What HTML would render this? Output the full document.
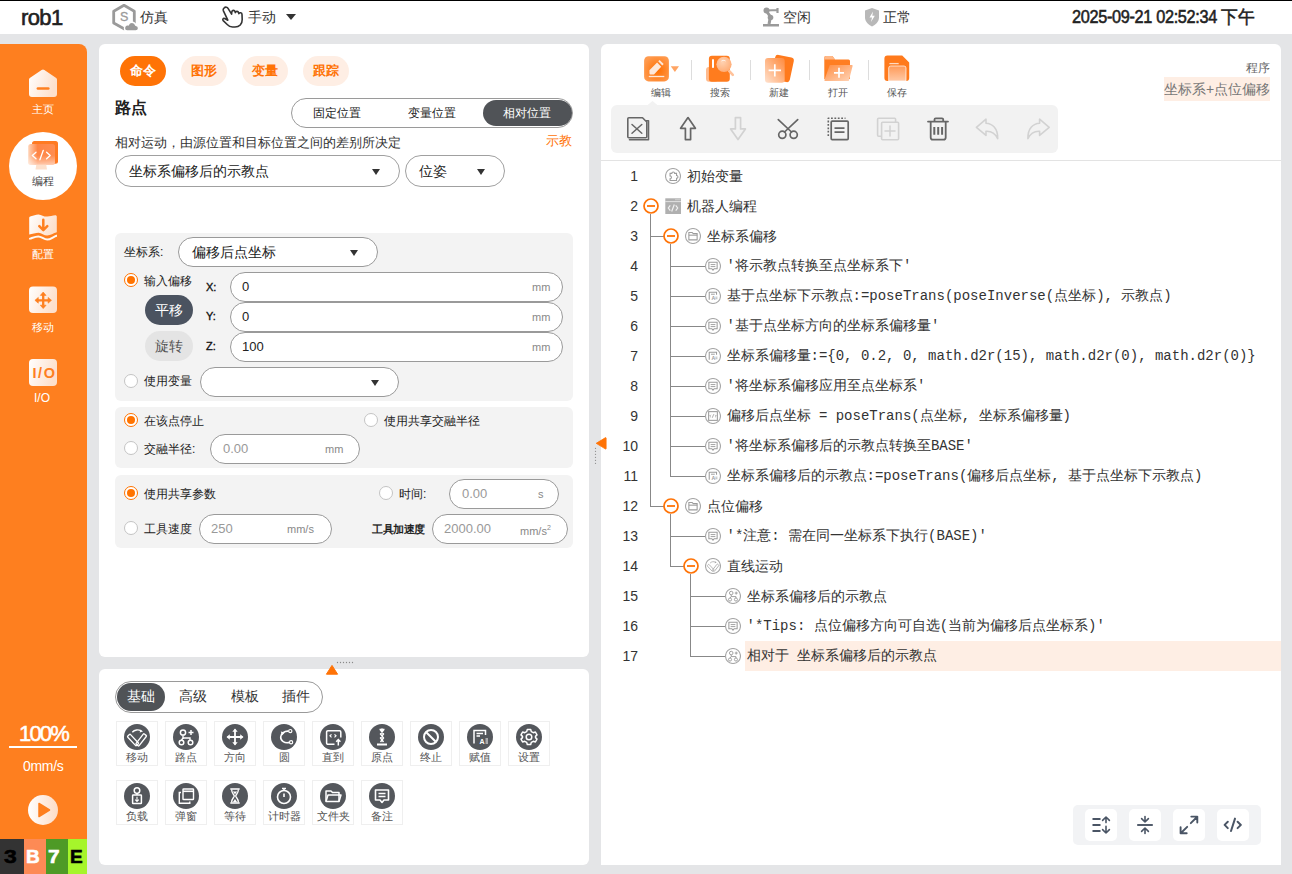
<!DOCTYPE html>
<html><head><meta charset="utf-8">
<style>
*{box-sizing:border-box;margin:0;padding:0}
html,body{width:1292px;height:874px;overflow:hidden;background:#e4e5e7;font-family:"Liberation Sans",sans-serif;color:#333}
.a{position:absolute}
.t{position:absolute;white-space:nowrap;line-height:1}
#top{left:0;top:0;width:1292px;height:34px;background:#fff;border-top:1px solid #000}
#side{left:0;top:44px;width:87px;height:830px;background:#fe7f1f;border-top-right-radius:8px}
.panel{position:absolute;background:#fff;border-radius:6px}
.pill{position:absolute;border-radius:15px;text-align:center;white-space:nowrap}
.radio{position:absolute;width:14px;height:14px;border-radius:50%;border:1px solid #c4c4c4;background:#fff}
.radio.on{border:1px solid #ff7300;background:#fff}
.radio.on:after{content:"";position:absolute;left:2px;top:2px;width:8px;height:8px;border-radius:50%;background:#ff7300}
.inp{position:absolute;border:1px solid #9a9a9a;border-radius:16px;background:#fff}
.tri{position:absolute;width:0;height:0;border-left:4.5px solid transparent;border-right:4.5px solid transparent;border-top:6px solid #333}
.box{position:absolute;background:#f3f3f3;border-radius:6px}
</style></head><body>
<!-- TOP BAR -->
<div id="top" class="a"></div>
<div class="t" style="left:21px;top:7px;font-size:22px;color:#222;-webkit-text-stroke:0.6px #222;letter-spacing:-0.6px">rob1</div>
<svg class="a" style="left:110px;top:3px" width="30" height="29" viewBox="0 0 30 29">
 <path d="M14 2.3 L24.3 8.2 V20 L14 25.8 L3.7 20 V8.2 Z" fill="none" stroke="#9a9a9a" stroke-width="2.8" stroke-linejoin="round"/>
 <text x="14.1" y="18" font-size="12.5" font-family="Liberation Sans" fill="#9a9a9a" stroke="#9a9a9a" stroke-width="0.3" text-anchor="middle">S</text>
 <path d="M17 28 h8.5 a2.9 2.9 0 0 0 0.3-5.8 a4 4 0 0 0-7.6 -0.3 a3 3 0 0 0 -1.2 6.1z" fill="#9a9a9a" stroke="#fff" stroke-width="1.4"/>
</svg>
<div class="t" style="left:140px;top:10px;font-size:14px;color:#333">仿真</div>
<svg class="a" style="left:221px;top:5px" width="25" height="24" viewBox="0 0 25 24">
 <path d="M3.2 2.8 C4.5 1.6 6.3 2.1 7.2 3.6 L10.6 9.2 L10.8 6.9 C11.2 4.9 13.6 4.9 14.1 6.8 L14.3 7.6 C14.9 5.9 17.2 6 17.6 7.8 L17.8 8.6 C18.6 7.1 21 7.6 21 9.5 L21.2 14.5 C21.3 19 18.3 22 14 22 L11.5 22 C9.3 22 7.6 21 6.2 19.5 L2.2 15.6 C1.2 14.5 2.2 12.9 3.7 13.5 L6.8 15.2 L2.3 5.6 C1.9 4.6 2.3 3.5 3.2 2.8 Z" fill="none" stroke="#333" stroke-width="1.6" stroke-linejoin="round"/>
</svg>
<div class="t" style="left:248px;top:10px;font-size:14px;color:#333">手动</div>
<div class="tri" style="left:286px;top:14px;border-left-width:5px;border-right-width:5px;border-top-width:6px"></div>
<svg class="a" style="left:762px;top:7px" width="19" height="20" viewBox="0 0 19 20">
 <circle cx="4.5" cy="3.5" r="3" fill="#9a9a9a"/><path d="M4.5 3.5 L15.5 3 M15.5 1 V6" stroke="#9a9a9a" stroke-width="2.2" fill="none"/>
 <path d="M4.5 4 L8.5 10" stroke="#9a9a9a" stroke-width="3"/><circle cx="8.5" cy="10.5" r="2.8" fill="#9a9a9a"/>
 <path d="M8 12 L7 17" stroke="#9a9a9a" stroke-width="3"/><rect x="1" y="17" width="16" height="2.5" fill="#9a9a9a"/>
</svg>
<div class="t" style="left:783px;top:10px;font-size:14px;color:#333">空闲</div>
<svg class="a" style="left:864px;top:7px" width="16" height="20" viewBox="0 0 16 20">
 <path d="M8 1 L15 3.5 V10.5 C15 15 11.5 17.5 8 19.5 C4.5 17.5 1 15 1 10.5 V3.5 Z" fill="#b8b8b8"/>
 <path d="M9 4.5 L5.5 10.5 H8 L7 15 L10.8 8.8 H8.3 Z" fill="#fff"/>
</svg>
<div class="t" style="left:883px;top:10px;font-size:14px;color:#333">正常</div>
<div class="t" style="left:1072px;top:9px;font-size:17.5px;color:#222;-webkit-text-stroke:0.55px #222;letter-spacing:-0.35px;transform:scaleX(0.93);transform-origin:0 0">2025-09-21 02:52:34 下午</div>

<!-- SIDEBAR -->
<div id="side" class="a"></div>
<svg width="0" height="0" style="position:absolute"><defs>
<linearGradient id="wg" x1="0" y1="0" x2="1" y2="0.3"><stop offset="0" stop-color="#fff"/><stop offset="1" stop-color="#fde0cc"/></linearGradient>
<linearGradient id="og" x1="0" y1="0" x2="1" y2="1"><stop offset="0" stop-color="#ffb27a"/><stop offset="1" stop-color="#ff6a10"/></linearGradient>
<linearGradient id="og2" x1="0" y1="0" x2="1" y2="0"><stop offset="0" stop-color="#ff8a3a"/><stop offset="1" stop-color="#ffc79e"/></linearGradient>
</defs></svg>
<!-- home -->
<svg class="a" style="left:29px;top:68px" width="28" height="29" viewBox="0 0 28 29">
 <path d="M12.6 1.9 a2.4 2.4 0 0 1 2.8 0 L27.2 10 a1.8 1.8 0 0 1 0.8 1.5 V26 a3 3 0 0 1-3 3 H3 a3 3 0 0 1-3-3 V11.5 a1.8 1.8 0 0 1 0.8-1.5 Z" fill="url(#wg)"/>
 <rect x="7.6" y="19.2" width="13" height="2.6" rx="1.3" fill="#fe7f1f"/>
</svg>
<div class="t" style="left:32px;top:104px;font-size:11px;color:#fff">主页</div>
<div class="a" style="left:9px;top:132px;width:68px;height:68px;border-radius:50%;background:#fff"></div>
<svg class="a" style="left:27px;top:140px" width="32" height="31" viewBox="0 0 32 31">
 <defs><linearGradient id="cg1" x1="0" y1="0" x2="1" y2="0"><stop offset="0" stop-color="#ffd6bb"/><stop offset="0.35" stop-color="#ff8545"/><stop offset="1" stop-color="#ff8d50"/></linearGradient>
 <linearGradient id="cg2" x1="0" y1="0" x2="0" y2="1"><stop offset="0.55" stop-color="#fff" stop-opacity="0"/><stop offset="1" stop-color="#fff" stop-opacity="0.55"/></linearGradient></defs>
 <rect x="5" y="1" width="26" height="22.8" rx="2.5" fill="#ff7a22"/>
 <rect x="1.2" y="3.9" width="26.8" height="20.9" rx="2.5" fill="url(#cg1)"/>
 <rect x="1.2" y="3.9" width="26.8" height="20.9" rx="2.5" fill="url(#cg2)"/>
 <path d="M9.3 24.8 H19.2 L20 29.6 H8.5Z" fill="#fde0cc"/>
 <path d="M9 12.2 L5.3 15.5 L9 18.8 M19.6 12.2 L23.2 15.5 L19.6 18.8 M16.3 10.3 L12.9 19.8" stroke="#fff" stroke-width="1.3" fill="none" stroke-linecap="round" stroke-linejoin="round"/>
</svg>
<div class="t" style="left:32px;top:176px;font-size:11px;color:#444">编程</div>
<!-- config -->
<svg class="a" style="left:29px;top:213px" width="28" height="28" viewBox="0 0 28 28">
 <path d="M0.2 5 C0.2 4 1 3.6 2 3.3 C4.5 2.5 7 1.3 9.6 1.4 C12.5 1.6 15 3.8 18.2 3.6 C21 3.4 23.5 2.3 26.3 2.2 C27.2 2.2 27.8 2.8 27.8 3.6 V19.3 C24.5 19.9 21.5 22.6 18.2 22.6 C15 22.6 12.5 19.7 9.6 19.7 C6.5 19.7 3.4 20.9 0.2 21.6 Z" fill="url(#wg)"/>
 <path d="M1 25.6 C3.5 24.8 6.5 23.4 9.3 23.4 C12.3 23.4 15 26.6 18.2 26.6 C21.3 26.6 24.5 23.7 27.5 22.8" stroke="#fff" stroke-width="2" fill="none" stroke-linecap="round" opacity="0.95"/>
 <path d="M14.3 6.8 V16.5 M10.3 13.2 L14.3 17.2 L18.3 13.2" stroke="#fe7f1f" stroke-width="2.5" fill="none" stroke-linecap="round" stroke-linejoin="round"/>
</svg>
<div class="t" style="left:32px;top:249px;font-size:11px;color:#fff">配置</div>
<!-- move -->
<svg class="a" style="left:29px;top:286px" width="28" height="28" viewBox="0 0 28 28">
 <rect x="0" y="0.5" width="28" height="26.5" rx="4" fill="url(#wg)"/>
 <path d="M14.2 9 V19.6 M8.9 14.3 H19.5" stroke="#fe7f1f" stroke-width="2.3"/>
 <path d="M14.2 6 L11.3 9.4 H17.1Z M14.2 22.6 L11.3 19.2 H17.1Z M5.9 14.3 L9.3 11.4 V17.2Z M22.5 14.3 L19.1 11.4 V17.2Z" fill="#fe7f1f" stroke="#fe7f1f" stroke-width="0.6" stroke-linejoin="round"/>
</svg>
<div class="t" style="left:32px;top:322px;font-size:11px;color:#fff">移动</div>
<!-- io -->
<svg class="a" style="left:29px;top:359px" width="28" height="28" viewBox="0 0 28 28">
 <rect x="0" y="0" width="28" height="27" rx="4" fill="url(#wg)"/>
 <text x="15.5" y="19.3" font-size="14.5" font-weight="bold" font-family="Liberation Sans" fill="#fe7f1f" text-anchor="middle" letter-spacing="1.6">I/O</text>
</svg>
<div class="t" style="left:34px;top:392px;font-size:12px;color:#fff">I/O</div>
<div class="t" style="left:19px;top:723px;font-size:22px;color:#fff;letter-spacing:-1.8px;-webkit-text-stroke:0.5px #fff">100%</div>
<div class="a" style="left:9px;top:746px;width:68px;height:1.5px;background:#fff"></div>
<div class="t" style="left:23px;top:759px;font-size:14px;color:#fff;letter-spacing:-0.3px">0mm/s</div>
<div class="a" style="left:28px;top:795px;width:30px;height:30px;border-radius:50%;background:linear-gradient(90deg,#fff,#fddcc6)"></div>
<svg class="a" style="left:37px;top:802px" width="14" height="16" viewBox="0 0 14 16"><path d="M2 1.5 L12.5 8 L2 14.5 Z" fill="#fe7f1f" stroke="#fe7f1f" stroke-width="1.5" stroke-linejoin="round"/></svg>
<div class="a" style="left:0;top:839px;width:24px;height:35px;background:#333"></div>
<div class="a" style="left:24px;top:839px;width:22px;height:35px;background:#fd8a55"></div>
<div class="a" style="left:46px;top:839px;width:22px;height:35px;background:#4e9a26"></div>
<div class="a" style="left:68px;top:839px;width:19px;height:35px;background:#a6f52b"></div>
<div class="t" style="left:4px;top:847px;font-size:19px;font-weight:bold;color:#000;-webkit-text-stroke:0.6px #000;transform:scaleX(1.2);transform-origin:0 0">3</div>
<div class="t" style="left:26px;top:847px;font-size:19px;font-weight:bold;color:#fff;-webkit-text-stroke:0.6px #fff">B</div>
<div class="t" style="left:48px;top:847px;font-size:19px;font-weight:bold;color:#fff;-webkit-text-stroke:0.6px #fff;transform:scaleX(1.1);transform-origin:0 0">7</div>
<div class="t" style="left:70px;top:847px;font-size:19px;font-weight:bold;color:#000;-webkit-text-stroke:0.6px #000">E</div>

<!-- LEFT PANEL -->
<div class="panel" style="left:99px;top:44px;width:490px;height:613px"></div>
<div class="pill" style="left:120px;top:56px;width:46px;height:30px;background:#ff7306"></div>
<div class="t" style="left:130px;top:64px;font-size:13px;color:#fff;font-weight:bold">命令</div>
<div class="pill" style="left:181px;top:56px;width:46px;height:30px;background:#feeee4"></div>
<div class="t" style="left:191px;top:64px;font-size:13px;color:#ff7306;font-weight:bold">图形</div>
<div class="pill" style="left:242px;top:56px;width:46px;height:30px;background:#feeee4"></div>
<div class="t" style="left:252px;top:64px;font-size:13px;color:#ff7306;font-weight:bold">变量</div>
<div class="pill" style="left:303px;top:56px;width:46px;height:30px;background:#feeee4"></div>
<div class="t" style="left:313px;top:64px;font-size:13px;color:#ff7306;font-weight:bold">跟踪</div>
<div class="t" style="left:115px;top:100px;font-size:16px;color:#222;font-weight:bold">路点</div>
<div class="a" style="left:291px;top:98px;width:282px;height:30px;border:1px solid #9a9a9a;border-radius:15px"></div>
<div class="a" style="left:483px;top:100px;width:89px;height:26px;border-radius:13px;background:#505357"></div>
<div class="t" style="left:313px;top:107px;font-size:12px;color:#222">固定位置</div>
<div class="t" style="left:408px;top:107px;font-size:12px;color:#222">变量位置</div>
<div class="t" style="left:503px;top:107px;font-size:12px;color:#fff">相对位置</div>
<div class="t" style="left:115px;top:136px;font-size:13px;color:#333">相对运动，由源位置和目标位置之间的差别所决定</div>
<div class="t" style="left:546px;top:134px;font-size:13px;color:#ff7306">示教</div>
<div class="inp" style="left:115px;top:155px;width:285px;height:32px;border-color:#a0a0a0"></div>
<div class="t" style="left:129px;top:164px;font-size:14px;color:#222">坐标系偏移后的示教点</div>
<div class="tri" style="left:372px;top:169px"></div>
<div class="inp" style="left:405px;top:155px;width:100px;height:32px;border-color:#a0a0a0"></div>
<div class="t" style="left:419px;top:164px;font-size:14px;color:#222">位姿</div>
<div class="tri" style="left:477px;top:169px"></div>

<div class="box" style="left:115px;top:233px;width:458px;height:168px"></div>
<div class="t" style="left:124px;top:246px;font-size:12px;color:#222">坐标系:</div>
<div class="inp" style="left:178px;top:237px;width:200px;height:30px"></div>
<div class="t" style="left:192px;top:245px;font-size:14px;color:#222">偏移后点坐标</div>
<div class="tri" style="left:350px;top:250px"></div>
<div class="radio on" style="left:124px;top:273px"></div>
<div class="t" style="left:144px;top:275px;font-size:12px;color:#222">输入偏移</div>
<div class="pill" style="left:145px;top:295px;width:48px;height:30px;background:#4b5360"></div>
<div class="t" style="left:155px;top:303px;font-size:14px;color:#fff">平移</div>
<div class="pill" style="left:145px;top:331px;width:48px;height:30px;background:#e4e4e4"></div>
<div class="t" style="left:155px;top:339px;font-size:14px;color:#555">旋转</div>
<div class="t" style="left:206px;top:282px;font-size:11px;color:#111;-webkit-text-stroke:0.35px #111">X:</div>
<div class="t" style="left:206px;top:311px;font-size:11px;color:#111;-webkit-text-stroke:0.35px #111">Y:</div>
<div class="t" style="left:206px;top:341px;font-size:11px;color:#111;-webkit-text-stroke:0.35px #111">Z:</div>
<div class="inp" style="left:230px;top:272px;width:333px;height:30px"></div>
<div class="inp" style="left:230px;top:302px;width:333px;height:30px"></div>
<div class="inp" style="left:230px;top:332px;width:333px;height:30px"></div>
<div class="t" style="left:242px;top:280px;font-size:13px;color:#222">0</div>
<div class="t" style="left:242px;top:310px;font-size:13px;color:#222">0</div>
<div class="t" style="left:242px;top:340px;font-size:13px;color:#222">100</div>
<div class="t" style="left:532px;top:282px;font-size:11px;color:#888">mm</div>
<div class="t" style="left:532px;top:312px;font-size:11px;color:#888">mm</div>
<div class="t" style="left:532px;top:342px;font-size:11px;color:#888">mm</div>
<div class="radio" style="left:124px;top:374px"></div>
<div class="t" style="left:144px;top:375px;font-size:12px;color:#222">使用变量</div>
<div class="inp" style="left:200px;top:367px;width:199px;height:30px"></div>
<div class="tri" style="left:371px;top:380px"></div>

<div class="box" style="left:115px;top:407px;width:458px;height:61px"></div>
<div class="radio on" style="left:124px;top:413px"></div>
<div class="t" style="left:144px;top:415px;font-size:12px;color:#222">在该点停止</div>
<div class="radio" style="left:364px;top:413px"></div>
<div class="t" style="left:384px;top:415px;font-size:12px;color:#222">使用共享交融半径</div>
<div class="radio" style="left:124px;top:441px"></div>
<div class="t" style="left:144px;top:443px;font-size:12px;color:#222">交融半径:</div>
<div class="inp" style="left:210px;top:434px;width:150px;height:30px"></div>
<div class="t" style="left:223px;top:442px;font-size:13px;color:#999">0.00</div>
<div class="t" style="left:325px;top:444px;font-size:11px;color:#888">mm</div>

<div class="box" style="left:115px;top:475px;width:458px;height:73px"></div>
<div class="radio on" style="left:124px;top:486px"></div>
<div class="t" style="left:144px;top:488px;font-size:12px;color:#222">使用共享参数</div>
<div class="radio" style="left:379px;top:486px"></div>
<div class="t" style="left:399px;top:488px;font-size:12px;color:#222">时间:</div>
<div class="inp" style="left:449px;top:479px;width:110px;height:30px"></div>
<div class="t" style="left:462px;top:487px;font-size:13px;color:#999">0.00</div>
<div class="t" style="left:538px;top:489px;font-size:11px;color:#888">s</div>
<div class="radio" style="left:124px;top:521px"></div>
<div class="t" style="left:144px;top:523px;font-size:12px;color:#222">工具速度</div>
<div class="inp" style="left:199px;top:514px;width:133px;height:30px"></div>
<div class="t" style="left:211px;top:522px;font-size:13px;color:#999">250</div>
<div class="t" style="left:287px;top:524px;font-size:11px;color:#888">mm/s</div>
<div class="t" style="left:372px;top:524px;font-size:10.5px;color:#111;letter-spacing:-0.45px;-webkit-text-stroke:0.35px #111">工具加速度</div>
<div class="inp" style="left:432px;top:514px;width:136px;height:30px"></div>
<div class="t" style="left:444px;top:522px;font-size:13px;color:#999">2000.00</div>
<div class="t" style="left:520px;top:524px;font-size:11px;color:#888">mm/s<sup style="font-size:7px;vertical-align:5px">2</sup></div>
<div class="panel" style="left:99px;top:669px;width:490px;height:196px"></div>
<svg class="a" style="left:324px;top:664px" width="16" height="12" viewBox="324 664 16 12"><path d="M332 665.4 L337.6 674.2 H326.4Z" fill="#ff7306" stroke="#ff7306" stroke-width="1" stroke-linejoin="round"/></svg>
<svg class="a" style="left:330px;top:655px" width="30" height="15" viewBox="330 655 30 15"><circle cx="337.5" cy="662.5" r="0.65" fill="#8a8a8a"/><circle cx="340.5" cy="662.5" r="0.65" fill="#8a8a8a"/><circle cx="343.5" cy="662.5" r="0.65" fill="#8a8a8a"/><circle cx="346.5" cy="662.5" r="0.65" fill="#8a8a8a"/><circle cx="349.5" cy="662.5" r="0.65" fill="#8a8a8a"/><circle cx="352.5" cy="662.5" r="0.65" fill="#8a8a8a"/></svg>
<div class="a" style="left:115px;top:681px;width:208px;height:32px;border:1px solid #9a9a9a;border-radius:16px"></div>
<div class="a" style="left:117px;top:683px;width:48px;height:28px;border-radius:14px;background:#505357"></div>
<div class="t" style="left:127px;top:690px;font-size:13.5px;color:#fff">基础</div>
<div class="t" style="left:179px;top:690px;font-size:13.5px;color:#333">高级</div>
<div class="t" style="left:231px;top:690px;font-size:13.5px;color:#333">模板</div>
<div class="t" style="left:282px;top:690px;font-size:13.5px;color:#333">插件</div>
<div class="a" style="left:116px;top:721px;width:42px;height:45px;border:1px solid #efefef"></div><svg class="a" style="left:124px;top:724px" width="26" height="26" viewBox="0 0 26 26"><circle cx="13" cy="13" r="13" fill="#54575c"/><rect x="-1.9" y="-6.4" width="3.8" height="12.8" rx="0.8" transform="translate(9 16) rotate(-43)" stroke="#fff" stroke-width="1.3" fill="none"/><rect x="-1.9" y="-6.6" width="3.8" height="13.2" rx="0.8" transform="translate(17.2 15.9) rotate(38)" stroke="#fff" stroke-width="1.3" fill="none"/><path d="M8.3 8.2 C10.5 5.6 14.5 5.3 17 6.8" stroke="#fff" stroke-width="1.4" fill="none"/><path d="M19 7.6 L15.6 8.4 L16.6 5.4Z" fill="#fff"/></svg><div class="t" style="left:126.0px;top:752px;font-size:11px;color:#555">移动</div>
<div class="a" style="left:165px;top:721px;width:42px;height:45px;border:1px solid #efefef"></div><svg class="a" style="left:173px;top:724px" width="26" height="26" viewBox="0 0 26 26"><circle cx="13" cy="13" r="13" fill="#54575c"/><circle cx="10" cy="8.5" r="2.6" stroke="#fff" stroke-width="1.5" fill="none"/><circle cx="8.5" cy="18.5" r="2.3" stroke="#fff" stroke-width="1.5" fill="none"/><circle cx="17.5" cy="18.5" r="2.3" stroke="#fff" stroke-width="1.5" fill="none"/><path d="M10 11.2 V14 M10 14 L8.5 16.2 M10 14 L17 14 V16.2" stroke="#fff" stroke-width="1.4" fill="none"/><path d="M15.5 8.5 H20.5 M18 6 V11" stroke="#fff" stroke-width="1.5"/></svg><div class="t" style="left:175.0px;top:752px;font-size:11px;color:#555">路点</div>
<div class="a" style="left:214px;top:721px;width:42px;height:45px;border:1px solid #efefef"></div><svg class="a" style="left:222px;top:724px" width="26" height="26" viewBox="0 0 26 26"><circle cx="13" cy="13" r="13" fill="#54575c"/><path d="M13 5.5 V20.5 M5.5 13 H20.5" stroke="#fff" stroke-width="1.8"/><path d="M13 4.5 L10.3 7.8 H15.7Z M13 21.5 L10.3 18.2 H15.7Z M4.5 13 L7.8 10.3 V15.7Z M21.5 13 L18.2 10.3 V15.7Z" fill="#fff"/></svg><div class="t" style="left:224.0px;top:752px;font-size:11px;color:#555">方向</div>
<div class="a" style="left:263px;top:721px;width:42px;height:45px;border:1px solid #efefef"></div><svg class="a" style="left:271px;top:724px" width="26" height="26" viewBox="0 0 26 26"><circle cx="13" cy="13" r="13" fill="#54575c"/><path d="M17.8 7.2 C13.5 6.8 9.8 9.3 9.7 13 C9.6 17 13.5 19.5 18.5 18.4" stroke="#fff" stroke-width="1.6" fill="none"/><circle cx="19.3" cy="7.1" r="1.6" stroke="#fff" stroke-width="1.2" fill="#555"/><circle cx="20.1" cy="18.2" r="1.6" stroke="#fff" stroke-width="1.2" fill="#555"/><path d="M9.8 7.6 L14 8.6 L11 11.4Z" fill="#fff"/></svg><div class="t" style="left:278.5px;top:752px;font-size:11px;color:#555">圆</div>
<div class="a" style="left:312px;top:721px;width:42px;height:45px;border:1px solid #efefef"></div><svg class="a" style="left:320px;top:724px" width="26" height="26" viewBox="0 0 26 26"><circle cx="13" cy="13" r="13" fill="#54575c"/><path d="M14.5 20.2 H7.8 a1.2 1.2 0 0 1-1.2-1.2 V7.9 a1.2 1.2 0 0 1 1.2-1.2 H19.6 a1.2 1.2 0 0 1 1.2 1.2 V13.5" stroke="#fff" stroke-width="1.5" fill="none"/><path d="M11.5 10.3 L10 11.8 L11.5 13.3 M14.5 10.3 L16 11.8 L14.5 13.3" stroke="#fff" stroke-width="1.2" fill="none"/><path d="M18.3 21.5 V15.8 M16.2 17.8 L18.3 15.6 L20.4 17.8" stroke="#fff" stroke-width="1.5" fill="none"/></svg><div class="t" style="left:322.0px;top:752px;font-size:11px;color:#555">直到</div>
<div class="a" style="left:361px;top:721px;width:42px;height:45px;border:1px solid #efefef"></div><svg class="a" style="left:369px;top:724px" width="26" height="26" viewBox="0 0 26 26"><circle cx="13" cy="13" r="13" fill="#54575c"/><path d="M10.5 5.5 H15.5 M11.5 6 L14.5 10 L11.5 14 L14.5 18 M14.5 6 L11.5 10 L14.5 14 L11.5 18" stroke="#fff" stroke-width="1.4" fill="none"/><circle cx="13" cy="6" r="1.4" fill="#fff"/><path d="M8 20.5 H18" stroke="#fff" stroke-width="2"/></svg><div class="t" style="left:371.0px;top:752px;font-size:11px;color:#555">原点</div>
<div class="a" style="left:410px;top:721px;width:42px;height:45px;border:1px solid #efefef"></div><svg class="a" style="left:418px;top:724px" width="26" height="26" viewBox="0 0 26 26"><circle cx="13" cy="13" r="13" fill="#54575c"/><circle cx="13" cy="13" r="7" stroke="#fff" stroke-width="2" fill="none"/><path d="M8.2 8.2 L17.8 17.8" stroke="#fff" stroke-width="2"/></svg><div class="t" style="left:420.0px;top:752px;font-size:11px;color:#555">终止</div>
<div class="a" style="left:459px;top:721px;width:42px;height:45px;border:1px solid #efefef"></div><svg class="a" style="left:467px;top:724px" width="26" height="26" viewBox="0 0 26 26"><circle cx="13" cy="13" r="13" fill="#54575c"/><path d="M7 19.5 V6.5 H18.5 V11" stroke="#fff" stroke-width="1.5" fill="none"/><path d="M9.5 9.5 H16 M9.5 12 H13" stroke="#fff" stroke-width="1.3"/><text x="15" y="20" font-size="7" font-weight="bold" font-family="Liberation Sans" fill="#fff" text-anchor="middle">A</text><path d="M18.5 15 H21 M18.5 17 H21 M18.5 19 H21" stroke="#fff" stroke-width="1"/></svg><div class="t" style="left:469.0px;top:752px;font-size:11px;color:#555">赋值</div>
<div class="a" style="left:508px;top:721px;width:42px;height:45px;border:1px solid #efefef"></div><svg class="a" style="left:516px;top:724px" width="26" height="26" viewBox="0 0 26 26"><circle cx="13" cy="13" r="13" fill="#54575c"/><circle cx="13" cy="13" r="2.8" stroke="#fff" stroke-width="1.5" fill="none"/><path d="M11.3 5.5 H14.7 L15.3 7.6 L17.3 8.7 L19.4 8 L21 10.9 L19.5 12.4 V13.6 L21 15.1 L19.4 18 L17.3 17.3 L15.3 18.4 L14.7 20.5 H11.3 L10.7 18.4 L8.7 17.3 L6.6 18 L5 15.1 L6.5 13.6 V12.4 L5 10.9 L6.6 8 L8.7 8.7 L10.7 7.6Z" stroke="#fff" stroke-width="1.5" fill="none" stroke-linejoin="round"/></svg><div class="t" style="left:518.0px;top:752px;font-size:11px;color:#555">设置</div>
<div class="a" style="left:116px;top:780px;width:42px;height:45px;border:1px solid #efefef"></div><svg class="a" style="left:124px;top:783px" width="26" height="26" viewBox="0 0 26 26"><circle cx="13" cy="13" r="13" fill="#54575c"/><circle cx="13" cy="7.6" r="2.8" stroke="#fff" stroke-width="1.5" fill="none"/><path d="M13 10.4 V12" stroke="#fff" stroke-width="1.4"/><rect x="8.6" y="12" width="8.8" height="8.6" rx="0.6" stroke="#fff" stroke-width="1.5" fill="none"/><path d="M13 13.8 V18.3 M11.2 16.6 L13 18.4 L14.8 16.6" stroke="#fff" stroke-width="1.1" fill="none"/></svg><div class="t" style="left:126.0px;top:811px;font-size:11px;color:#555">负载</div>
<div class="a" style="left:165px;top:780px;width:42px;height:45px;border:1px solid #efefef"></div><svg class="a" style="left:173px;top:783px" width="26" height="26" viewBox="0 0 26 26"><circle cx="13" cy="13" r="13" fill="#54575c"/><rect x="10" y="6" width="10.5" height="10.5" rx="0.6" stroke="#fff" stroke-width="1.4" fill="none"/><path d="M10 8.3 H20.5" stroke="#fff" stroke-width="1.6"/><path d="M8 9.5 H6.3 V20.3 H16.8 V18.5" stroke="#fff" stroke-width="1.4" fill="none"/></svg><div class="t" style="left:175.0px;top:811px;font-size:11px;color:#555">弹窗</div>
<div class="a" style="left:214px;top:780px;width:42px;height:45px;border:1px solid #efefef"></div><svg class="a" style="left:222px;top:783px" width="26" height="26" viewBox="0 0 26 26"><circle cx="13" cy="13" r="13" fill="#54575c"/><path d="M8.3 6 H17.7 M8.3 20 H17.7" stroke="#fff" stroke-width="1.7"/><path d="M9.6 6.5 C9.6 10.5 12.3 11.7 12.3 13 C12.3 14.3 9.6 15.5 9.6 19.5 M16.4 6.5 C16.4 10.5 13.7 11.7 13.7 13 C13.7 14.3 16.4 15.5 16.4 19.5" stroke="#fff" stroke-width="1.3" fill="none"/><path d="M10.8 8.5 H15.2 L13 11.3Z M13 16 L10.8 19.3 H15.2Z" fill="#fff"/></svg><div class="t" style="left:224.0px;top:811px;font-size:11px;color:#555">等待</div>
<div class="a" style="left:263px;top:780px;width:42px;height:45px;border:1px solid #efefef"></div><svg class="a" style="left:271px;top:783px" width="26" height="26" viewBox="0 0 26 26"><circle cx="13" cy="13" r="13" fill="#54575c"/><circle cx="13" cy="14" r="6.5" stroke="#fff" stroke-width="1.6" fill="none"/><path d="M11 5.5 H15 M13 5.5 V7.5 M13 14 V10.5" stroke="#fff" stroke-width="1.6"/></svg><div class="t" style="left:267.5px;top:811px;font-size:11px;color:#555">计时器</div>
<div class="a" style="left:312px;top:780px;width:42px;height:45px;border:1px solid #efefef"></div><svg class="a" style="left:320px;top:783px" width="26" height="26" viewBox="0 0 26 26"><circle cx="13" cy="13" r="13" fill="#54575c"/><path d="M6 8 H11 L12.5 9.5 H19 V18.5 H6Z" stroke="#fff" stroke-width="1.5" fill="none" stroke-linejoin="round"/><path d="M6 18.5 L8 12 H21 L19 18.5" stroke="#fff" stroke-width="1.5" fill="none" stroke-linejoin="round"/></svg><div class="t" style="left:316.5px;top:811px;font-size:11px;color:#555">文件夹</div>
<div class="a" style="left:361px;top:780px;width:42px;height:45px;border:1px solid #efefef"></div><svg class="a" style="left:369px;top:783px" width="26" height="26" viewBox="0 0 26 26"><circle cx="13" cy="13" r="13" fill="#54575c"/><path d="M6.5 7 H19.5 V17 H15 L13 19.5 L11 17 H6.5Z" stroke="#fff" stroke-width="1.6" fill="none" stroke-linejoin="round"/><path d="M9.5 10.5 H16.5 M9.5 13.5 H16.5" stroke="#fff" stroke-width="1.4"/></svg><div class="t" style="left:371.0px;top:811px;font-size:11px;color:#555">备注</div>

<!-- RIGHT PANEL -->
<div class="panel" style="left:601px;top:44px;width:680px;height:821px;border-bottom-right-radius:0;border-bottom-left-radius:0"></div>
<!-- big toolbar icons -->
<svg class="a" style="left:640px;top:52px" width="44" height="34" viewBox="640 52 44 34">
 <defs><radialGradient id="eg" cx="0.55" cy="0.55" r="0.6"><stop offset="0" stop-color="#ff6f00"/><stop offset="1" stop-color="#ff9a4e"/></radialGradient></defs>
 <rect x="644.1" y="56.3" width="24.8" height="25.1" rx="4.5" fill="url(#eg)"/>
 <path d="M649.4 70.2 L657.1 62.4 L661.2 66.7 L654 74.6 H650.5 a1 1 0 0 1-1-1Z" fill="#fde8da"/>
 <path d="M658.2 61.3 L659.6 59.9 L663.7 64.1 L662.3 65.5Z" fill="#fde8da"/>
 <path d="M648.8 76.5 H664.3" stroke="#fde8da" stroke-width="1.3"/>
 <path d="M670.8 66.3 H679 L674.9 71.9Z" fill="#ffa463"/>
</svg>
<div class="t" style="left:651px;top:88px;font-size:10px;color:#555">编辑</div>
<div class="a" style="left:691px;top:60px;width:1px;height:20px;background:#ddd"></div>
<svg class="a" style="left:705px;top:55px" width="30" height="28" viewBox="0 0 30 28">
 <defs><radialGradient id="mg" cx="0.4" cy="0.35" r="0.7"><stop offset="0" stop-color="#ffd2b2"/><stop offset="1" stop-color="#ffab73"/></radialGradient></defs>
 <rect x="1" y="12" width="12" height="14.7" rx="3" fill="#ffbb8e"/>
 <rect x="3.9" y="0.8" width="20.9" height="25.9" rx="3" fill="#ff7c1e"/>
 <rect x="7" y="4.3" width="2" height="8.5" fill="#fff"/>
 <path d="M24.3 16.2 L27.8 19.8" stroke="#ffc29a" stroke-width="2.6" stroke-linecap="round"/>
 <circle cx="19" cy="9.3" r="7.6" fill="url(#mg)"/>
 <path d="M16.5 6 C17.5 5.2 19.5 5.2 20.5 6" stroke="#fff" stroke-width="0.9" fill="none"/>
</svg>
<div class="t" style="left:710px;top:88px;font-size:10px;color:#555">搜索</div>
<div class="a" style="left:750px;top:60px;width:1px;height:20px;background:#ddd"></div>
<svg class="a" style="left:760px;top:52px" width="36" height="34" viewBox="760 52 36 34">
 <defs><linearGradient id="ng" x1="0" y1="1" x2="1" y2="0"><stop offset="0" stop-color="#ffe2cf"/><stop offset="0.6" stop-color="#ffac75"/><stop offset="1" stop-color="#ff8a3c"/></linearGradient></defs>
 <rect x="773" y="56" width="19" height="25" rx="3" fill="#ff7a1c" transform="rotate(12 782.5 68.5)"/>
 <rect x="765" y="58" width="19.7" height="24.8" rx="3" fill="url(#ng)"/>
 <path d="M774.8 64.2 V76.6 M768.6 70.4 H781" stroke="#fff" stroke-width="1.7"/>
</svg>
<div class="t" style="left:769px;top:88px;font-size:10px;color:#555">新建</div>
<div class="a" style="left:809px;top:60px;width:1px;height:20px;background:#ddd"></div>
<svg class="a" style="left:820px;top:52px" width="36" height="34" viewBox="820 52 36 34">
 <defs><linearGradient id="fg" x1="0" y1="0" x2="1" y2="1"><stop offset="0" stop-color="#ff8c40"/><stop offset="1" stop-color="#ffd6bb"/></linearGradient></defs>
 <path d="M824.3 57.5 a1.5 1.5 0 0 1 1.5-1.5 H832.5 L835 59.5 H848.5 a1.5 1.5 0 0 1 1.5 1.5 V79 H824.3Z" fill="#ff7e22"/>
 <path d="M824.3 57.5 a1.5 1.5 0 0 1 1.5-1.5 H832.5 L835 59.5 H824.3Z" fill="#ffb888"/>
 <path d="M829.8 64.9 H851.8 a0.8 0.8 0 0 1 0.8 1 L848.8 81 H825.2 a0.8 0.8 0 0 1-0.8-1 Z" fill="url(#fg)"/>
 <path d="M839 67.8 V77.8 M834 72.8 H844" stroke="#fff" stroke-width="1.7"/>
</svg>
<div class="t" style="left:828px;top:88px;font-size:10px;color:#555">打开</div>
<div class="a" style="left:868px;top:60px;width:1px;height:20px;background:#ddd"></div>
<svg class="a" style="left:880px;top:52px" width="34" height="34" viewBox="880 52 34 34">
 <defs><linearGradient id="sg" x1="0" y1="0" x2="0" y2="1"><stop offset="0" stop-color="#ff9a58"/><stop offset="1" stop-color="#ffc9a6"/></linearGradient></defs>
 <path d="M884.4 58.6 a3 3 0 0 1 3-3 H902.2 L909.2 62.6 V78 a3 3 0 0 1-3 3 H887.4 a3 3 0 0 1-3-3Z" fill="#ff7a1c"/>
 <path d="M888.7 81 V68 a2 2 0 0 1 2-2 H904 a2 2 0 0 1 2 2 V81Z" fill="url(#sg)" stroke="#fff" stroke-width="0.7"/>
 <path d="M889.4 63.6 H898.7" stroke="#ffd9c0" stroke-width="1.3"/>
</svg>
<div class="t" style="left:887px;top:88px;font-size:10px;color:#555">保存</div>
<div class="t" style="left:1246px;top:63px;font-size:11.5px;color:#666">程序</div>
<div class="a" style="left:1164px;top:77px;width:106px;height:24px;background:#feeee4"></div>
<div class="t" style="left:1164px;top:82px;font-size:14px;color:#777">坐标系+点位偏移</div>
<!-- toolbar box -->
<div class="a" style="left:611px;top:105px;width:447px;height:48px;background:#f2f2f2;border-radius:6px"></div>
<svg class="a" style="left:647px;top:101px" width="11" height="5" viewBox="0 0 11 5"><path d="M0 4.5 L5.5 0 L11 4.5 V5 H0Z" fill="#f2f2f2"/></svg>
<svg class="a" style="left:611px;top:105px" width="447" height="48" viewBox="611 105 447 48" fill="none" stroke-linejoin="round" stroke-linecap="round">
 <path d="M629.5 120.8 H648.5 V139.8 H629.5" stroke="#666" stroke-width="1.6"/>
 <path d="M628.8 117.8 H642.5 L646.8 122 V136.8 a1 1 0 0 1-1 1 H628.8 a1 1 0 0 1-1-1 V118.8 a1 1 0 0 1 1-1Z" stroke="#666" stroke-width="1.6" fill="#f2f2f2"/>
 <path d="M632 124.5 L641.8 133.3 M641.8 124.5 L632 133.3" stroke="#666" stroke-width="1.5"/>
 <path d="M688 117.6 L680.6 128.3 H685.4 V139.6 H690.6 V128.3 H695.4Z" stroke="#666" stroke-width="1.7"/>
 <path d="M738 139.6 L730.6 128.9 H735.4 V117.6 H740.6 V128.9 H745.4Z" stroke="#d2d2d2" stroke-width="1.7"/>
 <path d="M778.3 119.6 L791.5 132 M797.7 119.6 L784.5 132" stroke="#666" stroke-width="1.7"/>
 <circle cx="782.3" cy="134.8" r="3.6" stroke="#666" stroke-width="1.7"/><circle cx="793.7" cy="134.8" r="3.6" stroke="#666" stroke-width="1.7"/>
 <path d="M828.3 136 V118.3 H845.5" stroke="#666" stroke-width="1.6" stroke-dasharray="1.8 1.6" stroke-linecap="butt"/>
 <rect x="831.2" y="121.2" width="17" height="18.4" rx="1" stroke="#666" stroke-width="1.7" fill="#f2f2f2"/>
 <path d="M834.5 128.2 H844.5 M834.5 132.2 H844.5" stroke="#666" stroke-width="1.7" stroke-linecap="butt"/>
 <rect x="877.6" y="118.2" width="18" height="18" rx="1" stroke="#d2d2d2" stroke-width="1.6"/>
 <rect x="881.6" y="122.2" width="17" height="17.5" rx="1" stroke="#d2d2d2" stroke-width="1.6" fill="#f2f2f2"/>
 <path d="M890 126 V136 M885 131 H895" stroke="#d2d2d2" stroke-width="1.5"/>
 <path d="M928 121.6 H948 M934.5 121 V119.5 a1.2 1.2 0 0 1 1.2-1.2 H942 a1.2 1.2 0 0 1 1.2 1.2 V121" stroke="#666" stroke-width="1.8"/>
 <path d="M930.7 122 V137.5 a2.2 2.2 0 0 0 2.2 2.2 H943.5 a2.2 2.2 0 0 0 2.2-2.2 V122" stroke="#666" stroke-width="1.8"/>
 <path d="M934.3 127 V134.8 M938.2 127 V134.8 M942.1 127 V134.8" stroke="#666" stroke-width="2" stroke-linecap="butt"/>
 <path d="M976.4 127.3 L986 119.2 V123.2 C992 123.5 998 128 997.7 138.7 C995 133 991 131 986 131.3 V135.4Z" stroke="#d2d2d2" stroke-width="1.6"/>
 <path d="M1049.2 127.3 L1039.6 119.2 V123.2 C1033.6 123.5 1027.6 128 1027.9 138.7 C1030.6 133 1034.6 131 1039.6 131.3 V135.4Z" stroke="#d2d2d2" stroke-width="1.6"/>
</svg>
<div class="a" style="left:601px;top:160px;width:680px;height:1px;background:#e3e3e3"></div>

<div class="a" style="left:745px;top:641px;width:536px;height:30px;background:#feeee4"></div>
<div class="a" style="left:650px;top:214px;width:1px;height:293px;background:#888"></div>
<div class="a" style="left:650px;top:236px;width:14px;height:1px;background:#888"></div>
<div class="a" style="left:650px;top:506px;width:14px;height:1px;background:#888"></div>
<div class="a" style="left:670px;top:244px;width:1px;height:233px;background:#888"></div>
<div class="a" style="left:670px;top:266px;width:36px;height:1px;background:#888"></div>
<div class="a" style="left:670px;top:296px;width:36px;height:1px;background:#888"></div>
<div class="a" style="left:670px;top:326px;width:36px;height:1px;background:#888"></div>
<div class="a" style="left:670px;top:356px;width:36px;height:1px;background:#888"></div>
<div class="a" style="left:670px;top:386px;width:36px;height:1px;background:#888"></div>
<div class="a" style="left:670px;top:416px;width:36px;height:1px;background:#888"></div>
<div class="a" style="left:670px;top:446px;width:36px;height:1px;background:#888"></div>
<div class="a" style="left:670px;top:476px;width:36px;height:1px;background:#888"></div>
<div class="a" style="left:670px;top:514px;width:1px;height:53px;background:#888"></div>
<div class="a" style="left:670px;top:536px;width:36px;height:1px;background:#888"></div>
<div class="a" style="left:670px;top:566px;width:14px;height:1px;background:#888"></div>
<div class="a" style="left:690px;top:574px;width:1px;height:83px;background:#888"></div>
<div class="a" style="left:690px;top:596px;width:35px;height:1px;background:#888"></div>
<div class="a" style="left:690px;top:626px;width:35px;height:1px;background:#888"></div>
<div class="a" style="left:690px;top:656px;width:35px;height:1px;background:#888"></div>
<div class="t" style="left:597px;top:169px;width:41px;text-align:right;font-size:14px;color:#333">1</div>
<svg class="a" style="left:665px;top:168px" width="16" height="16" viewBox="0 0 16 16"><circle cx="8" cy="8" r="7.5" stroke="#a8a8a8" stroke-width="1.1" fill="#fff"/><g transform="translate(8 8) scale(1.18) translate(-8 -8)"><path d="M5.5 5.8 h1.5 a1.2 1.2 0 1 1 2.4 0 h1.6 v1.8 a1.2 1.2 0 1 1 0 2.4 v1.8 h-5.5 v-1.5 a1.2 1.2 0 1 0 0-2.4Z" stroke="#9c9c9c" stroke-width="0.9" fill="none"/></g></svg>
<div class="t" style="left:686.5px;top:169px;font-size:14px;color:#333;font-family:'Liberation Sans',sans-serif">初始变量</div>
<div class="t" style="left:597px;top:199px;width:41px;text-align:right;font-size:14px;color:#333">2</div>
<svg class="a" style="left:643px;top:198px" width="16" height="16" viewBox="0 0 16 16"><circle cx="8" cy="8" r="7" stroke="#ff7306" stroke-width="1.7" fill="#fff"/><path d="M4 8 H12" stroke="#ff7306" stroke-width="1.8"/></svg>
<svg class="a" style="left:665px;top:198px" width="16" height="16" viewBox="0 0 16 16"><rect x="0.3" y="0.3" width="15.7" height="15.7" fill="#b0b0b0"/><rect x="0.3" y="3.2" width="15.7" height="0.9" fill="#fff" opacity="0.7"/><path d="M10.5 1.7 h1 M12.5 1.7 h1 M14.5 1.7 h0.8" stroke="#eee" stroke-width="1"/><path d="M5.3 7.3 L3.3 10 L5.3 12.7 M10.7 7.3 L12.7 10 L10.7 12.7 M9.3 6.5 L6.7 13.5" stroke="#f0f0f0" stroke-width="1.2" fill="none"/></svg>
<div class="t" style="left:686.5px;top:199px;font-size:14px;color:#333;font-family:'Liberation Sans',sans-serif">机器人编程</div>
<div class="t" style="left:597px;top:229px;width:41px;text-align:right;font-size:14px;color:#333">3</div>
<svg class="a" style="left:663px;top:228px" width="16" height="16" viewBox="0 0 16 16"><circle cx="8" cy="8" r="7" stroke="#ff7306" stroke-width="1.7" fill="#fff"/><path d="M4 8 H12" stroke="#ff7306" stroke-width="1.8"/></svg>
<svg class="a" style="left:685px;top:228px" width="16" height="16" viewBox="0 0 16 16"><circle cx="8" cy="8" r="7.5" stroke="#a8a8a8" stroke-width="1.1" fill="#fff"/><g transform="translate(8 8) scale(1.18) translate(-8 -8)"><path d="M4.5 5 H7.3 L8.2 6 H11.5 V11.3 H4.5Z" stroke="#9c9c9c" stroke-width="0.9" fill="none"/><path d="M4.5 7.3 H11.5" stroke="#9c9c9c" stroke-width="0.9"/></g></svg>
<div class="t" style="left:706.5px;top:229px;font-size:14px;color:#333;font-family:'Liberation Sans',sans-serif">坐标系偏移</div>
<div class="t" style="left:597px;top:259px;width:41px;text-align:right;font-size:14px;color:#333">4</div>
<svg class="a" style="left:705px;top:258px" width="16" height="16" viewBox="0 0 16 16"><circle cx="8" cy="8" r="7.5" stroke="#a8a8a8" stroke-width="1.1" fill="#fff"/><g transform="translate(8 8) scale(1.18) translate(-8 -8)"><path d="M4.5 4.8 H11.5 V10.3 H9 L8 11.5 L7 10.3 H4.5Z" stroke="#9c9c9c" stroke-width="0.9" fill="none"/><path d="M6 6.8 H10 M6 8.5 H10" stroke="#9c9c9c" stroke-width="0.8"/></g></svg>
<div class="t" style="left:726.5px;top:259px;font-size:14px;color:#333;font-family:'Liberation Mono',monospace">'将示教点转换至点坐标系下'</div>
<div class="t" style="left:597px;top:289px;width:41px;text-align:right;font-size:14px;color:#333">5</div>
<svg class="a" style="left:705px;top:288px" width="16" height="16" viewBox="0 0 16 16"><circle cx="8" cy="8" r="7.5" stroke="#a8a8a8" stroke-width="1.1" fill="#fff"/><g transform="translate(8 8) scale(1.18) translate(-8 -8)"><path d="M4.8 11.2 V4.8 H11 V7" stroke="#9c9c9c" stroke-width="0.9" fill="none"/><path d="M6.3 6.5 H9.5" stroke="#9c9c9c" stroke-width="0.8"/><text x="8.3" y="11.3" font-size="4.5" font-family="Liberation Sans" font-weight="bold" fill="#9c9c9c" text-anchor="middle">A</text><path d="M10 9 H11.8 M10 10.3 H11.8" stroke="#9c9c9c" stroke-width="0.6"/></g></svg>
<div class="t" style="left:726.5px;top:289px;font-size:14px;color:#333;font-family:'Liberation Mono',monospace">基于点坐标下示教点:=poseTrans(poseInverse(点坐标), 示教点)</div>
<div class="t" style="left:597px;top:319px;width:41px;text-align:right;font-size:14px;color:#333">6</div>
<svg class="a" style="left:705px;top:318px" width="16" height="16" viewBox="0 0 16 16"><circle cx="8" cy="8" r="7.5" stroke="#a8a8a8" stroke-width="1.1" fill="#fff"/><g transform="translate(8 8) scale(1.18) translate(-8 -8)"><path d="M4.5 4.8 H11.5 V10.3 H9 L8 11.5 L7 10.3 H4.5Z" stroke="#9c9c9c" stroke-width="0.9" fill="none"/><path d="M6 6.8 H10 M6 8.5 H10" stroke="#9c9c9c" stroke-width="0.8"/></g></svg>
<div class="t" style="left:726.5px;top:319px;font-size:14px;color:#333;font-family:'Liberation Mono',monospace">'基于点坐标方向的坐标系偏移量'</div>
<div class="t" style="left:597px;top:349px;width:41px;text-align:right;font-size:14px;color:#333">7</div>
<svg class="a" style="left:705px;top:348px" width="16" height="16" viewBox="0 0 16 16"><circle cx="8" cy="8" r="7.5" stroke="#a8a8a8" stroke-width="1.1" fill="#fff"/><g transform="translate(8 8) scale(1.18) translate(-8 -8)"><path d="M4.8 11.2 V4.8 H11 V7" stroke="#9c9c9c" stroke-width="0.9" fill="none"/><path d="M6.3 6.5 H9.5" stroke="#9c9c9c" stroke-width="0.8"/><text x="8.3" y="11.3" font-size="4.5" font-family="Liberation Sans" font-weight="bold" fill="#9c9c9c" text-anchor="middle">A</text><path d="M10 9 H11.8 M10 10.3 H11.8" stroke="#9c9c9c" stroke-width="0.6"/></g></svg>
<div class="t" style="left:726.5px;top:349px;font-size:14px;color:#333;font-family:'Liberation Mono',monospace">坐标系偏移量:={0, 0.2, 0, math.d2r(15), math.d2r(0), math.d2r(0)}</div>
<div class="t" style="left:597px;top:379px;width:41px;text-align:right;font-size:14px;color:#333">8</div>
<svg class="a" style="left:705px;top:378px" width="16" height="16" viewBox="0 0 16 16"><circle cx="8" cy="8" r="7.5" stroke="#a8a8a8" stroke-width="1.1" fill="#fff"/><g transform="translate(8 8) scale(1.18) translate(-8 -8)"><path d="M4.5 4.8 H11.5 V10.3 H9 L8 11.5 L7 10.3 H4.5Z" stroke="#9c9c9c" stroke-width="0.9" fill="none"/><path d="M6 6.8 H10 M6 8.5 H10" stroke="#9c9c9c" stroke-width="0.8"/></g></svg>
<div class="t" style="left:726.5px;top:379px;font-size:14px;color:#333;font-family:'Liberation Mono',monospace">'将坐标系偏移应用至点坐标系'</div>
<div class="t" style="left:597px;top:409px;width:41px;text-align:right;font-size:14px;color:#333">9</div>
<svg class="a" style="left:705px;top:408px" width="16" height="16" viewBox="0 0 16 16"><circle cx="8" cy="8" r="7.5" stroke="#a8a8a8" stroke-width="1.1" fill="#fff"/><g transform="translate(8 8) scale(1.18) translate(-8 -8)"><rect x="4.3" y="4.3" width="7.4" height="7.4" stroke="#9c9c9c" stroke-width="0.9" fill="none"/><path d="M6.2 7 L5.2 8 L6.2 9 M9.8 7 L10.8 8 L9.8 9 M8.6 6.5 L7.4 9.5" stroke="#9c9c9c" stroke-width="0.7" fill="none"/></g></svg>
<div class="t" style="left:726.5px;top:409px;font-size:14px;color:#333;font-family:'Liberation Mono',monospace">偏移后点坐标 = poseTrans(点坐标, 坐标系偏移量)</div>
<div class="t" style="left:597px;top:439px;width:41px;text-align:right;font-size:14px;color:#333">10</div>
<svg class="a" style="left:705px;top:438px" width="16" height="16" viewBox="0 0 16 16"><circle cx="8" cy="8" r="7.5" stroke="#a8a8a8" stroke-width="1.1" fill="#fff"/><g transform="translate(8 8) scale(1.18) translate(-8 -8)"><path d="M4.5 4.8 H11.5 V10.3 H9 L8 11.5 L7 10.3 H4.5Z" stroke="#9c9c9c" stroke-width="0.9" fill="none"/><path d="M6 6.8 H10 M6 8.5 H10" stroke="#9c9c9c" stroke-width="0.8"/></g></svg>
<div class="t" style="left:726.5px;top:439px;font-size:14px;color:#333;font-family:'Liberation Mono',monospace">'将坐标系偏移后的示教点转换至BASE'</div>
<div class="t" style="left:597px;top:469px;width:41px;text-align:right;font-size:14px;color:#333">11</div>
<svg class="a" style="left:705px;top:468px" width="16" height="16" viewBox="0 0 16 16"><circle cx="8" cy="8" r="7.5" stroke="#a8a8a8" stroke-width="1.1" fill="#fff"/><g transform="translate(8 8) scale(1.18) translate(-8 -8)"><path d="M4.8 11.2 V4.8 H11 V7" stroke="#9c9c9c" stroke-width="0.9" fill="none"/><path d="M6.3 6.5 H9.5" stroke="#9c9c9c" stroke-width="0.8"/><text x="8.3" y="11.3" font-size="4.5" font-family="Liberation Sans" font-weight="bold" fill="#9c9c9c" text-anchor="middle">A</text><path d="M10 9 H11.8 M10 10.3 H11.8" stroke="#9c9c9c" stroke-width="0.6"/></g></svg>
<div class="t" style="left:726.5px;top:469px;font-size:14px;color:#333;font-family:'Liberation Mono',monospace">坐标系偏移后的示教点:=poseTrans(偏移后点坐标, 基于点坐标下示教点)</div>
<div class="t" style="left:597px;top:499px;width:41px;text-align:right;font-size:14px;color:#333">12</div>
<svg class="a" style="left:663px;top:498px" width="16" height="16" viewBox="0 0 16 16"><circle cx="8" cy="8" r="7" stroke="#ff7306" stroke-width="1.7" fill="#fff"/><path d="M4 8 H12" stroke="#ff7306" stroke-width="1.8"/></svg>
<svg class="a" style="left:685px;top:498px" width="16" height="16" viewBox="0 0 16 16"><circle cx="8" cy="8" r="7.5" stroke="#a8a8a8" stroke-width="1.1" fill="#fff"/><g transform="translate(8 8) scale(1.18) translate(-8 -8)"><path d="M4.5 5 H7.3 L8.2 6 H11.5 V11.3 H4.5Z" stroke="#9c9c9c" stroke-width="0.9" fill="none"/><path d="M4.5 7.3 H11.5" stroke="#9c9c9c" stroke-width="0.9"/></g></svg>
<div class="t" style="left:706.5px;top:499px;font-size:14px;color:#333;font-family:'Liberation Sans',sans-serif">点位偏移</div>
<div class="t" style="left:597px;top:529px;width:41px;text-align:right;font-size:14px;color:#333">13</div>
<svg class="a" style="left:705px;top:528px" width="16" height="16" viewBox="0 0 16 16"><circle cx="8" cy="8" r="7.5" stroke="#a8a8a8" stroke-width="1.1" fill="#fff"/><g transform="translate(8 8) scale(1.18) translate(-8 -8)"><path d="M4.5 4.8 H11.5 V10.3 H9 L8 11.5 L7 10.3 H4.5Z" stroke="#9c9c9c" stroke-width="0.9" fill="none"/><path d="M6 6.8 H10 M6 8.5 H10" stroke="#9c9c9c" stroke-width="0.8"/></g></svg>
<div class="t" style="left:726.5px;top:529px;font-size:14px;color:#333;font-family:'Liberation Mono',monospace">'*注意: 需在同一坐标系下执行(BASE)'</div>
<div class="t" style="left:597px;top:559px;width:41px;text-align:right;font-size:14px;color:#333">14</div>
<svg class="a" style="left:683px;top:558px" width="16" height="16" viewBox="0 0 16 16"><circle cx="8" cy="8" r="7" stroke="#ff7306" stroke-width="1.7" fill="#fff"/><path d="M4 8 H12" stroke="#ff7306" stroke-width="1.8"/></svg>
<svg class="a" style="left:705px;top:558px" width="16" height="16" viewBox="0 0 16 16"><circle cx="8" cy="8" r="7.5" stroke="#a8a8a8" stroke-width="1.1" fill="#fff"/><g transform="translate(0 0)"><rect x="-1.1" y="-3.9" width="2.3" height="7.9" rx="0.5" transform="translate(5.55 9.85) rotate(-43)" stroke="#a8a8a8" stroke-width="0.8" fill="none"/><rect x="-1.1" y="-4.1" width="2.3" height="8.1" rx="0.5" transform="translate(10.6 9.8) rotate(38)" stroke="#a8a8a8" stroke-width="0.8" fill="none"/><path d="M5.1 5.1 C6.5 3.5 9 3.3 10.5 4.2" stroke="#a8a8a8" stroke-width="0.8" fill="none"/><path d="M11.7 4.7 L9.6 5.2 L10.2 3.3Z" fill="#a8a8a8"/></g></svg>
<div class="t" style="left:726.5px;top:559px;font-size:14px;color:#333;font-family:'Liberation Sans',sans-serif">直线运动</div>
<div class="t" style="left:597px;top:589px;width:41px;text-align:right;font-size:14px;color:#333">15</div>
<svg class="a" style="left:725px;top:588px" width="16" height="16" viewBox="0 0 16 16"><circle cx="8" cy="8" r="7.5" stroke="#a8a8a8" stroke-width="1.1" fill="#fff"/><g transform="translate(8 8) scale(1.18) translate(-8 -8)"><circle cx="6.5" cy="5.5" r="1.5" stroke="#9c9c9c" stroke-width="0.8" fill="none"/><circle cx="5.5" cy="11" r="1.3" stroke="#9c9c9c" stroke-width="0.8" fill="none"/><circle cx="10.5" cy="11" r="1.3" stroke="#9c9c9c" stroke-width="0.8" fill="none"/><path d="M6.5 7 V8.5 L5.5 9.7 M6.5 8.5 H10.5 V9.7 M9.5 5.5 H12 M10.7 4.3 V6.8" stroke="#9c9c9c" stroke-width="0.8" fill="none"/></g></svg>
<div class="t" style="left:746.5px;top:589px;font-size:14px;color:#333;font-family:'Liberation Sans',sans-serif">坐标系偏移后的示教点</div>
<div class="t" style="left:597px;top:619px;width:41px;text-align:right;font-size:14px;color:#333">16</div>
<svg class="a" style="left:725px;top:618px" width="16" height="16" viewBox="0 0 16 16"><circle cx="8" cy="8" r="7.5" stroke="#a8a8a8" stroke-width="1.1" fill="#fff"/><g transform="translate(8 8) scale(1.18) translate(-8 -8)"><path d="M4.5 4.8 H11.5 V10.3 H9 L8 11.5 L7 10.3 H4.5Z" stroke="#9c9c9c" stroke-width="0.9" fill="none"/><path d="M6 6.8 H10 M6 8.5 H10" stroke="#9c9c9c" stroke-width="0.8"/></g></svg>
<div class="t" style="left:746.5px;top:619px;font-size:14px;color:#333;font-family:'Liberation Mono',monospace">'*Tips: 点位偏移方向可自选(当前为偏移后点坐标系)'</div>
<div class="t" style="left:597px;top:649px;width:41px;text-align:right;font-size:14px;color:#333">17</div>
<svg class="a" style="left:725px;top:648px" width="16" height="16" viewBox="0 0 16 16"><circle cx="8" cy="8" r="7.5" stroke="#a8a8a8" stroke-width="1.1" fill="#fff"/><g transform="translate(8 8) scale(1.18) translate(-8 -8)"><circle cx="6.5" cy="5.5" r="1.5" stroke="#9c9c9c" stroke-width="0.8" fill="none"/><circle cx="5.5" cy="11" r="1.3" stroke="#9c9c9c" stroke-width="0.8" fill="none"/><circle cx="10.5" cy="11" r="1.3" stroke="#9c9c9c" stroke-width="0.8" fill="none"/><path d="M6.5 7 V8.5 L5.5 9.7 M6.5 8.5 H10.5 V9.7 M9.5 5.5 H12 M10.7 4.3 V6.8" stroke="#9c9c9c" stroke-width="0.8" fill="none"/></g></svg>
<div class="t" style="left:746.5px;top:649px;font-size:14px;color:#333;font-family:'Liberation Mono',monospace">相对于 坐标系偏移后的示教点</div>
<div class="a" style="left:1073px;top:805px;width:188px;height:40px;background:#f2f3f5;border-radius:5px"></div>
<div class="a" style="left:1085px;top:809px;width:32px;height:32px;background:#fff;border-radius:5px"></div>
<div class="a" style="left:1129px;top:809px;width:32px;height:32px;background:#fff;border-radius:5px"></div>
<div class="a" style="left:1173px;top:809px;width:32px;height:32px;background:#fff;border-radius:5px"></div>
<div class="a" style="left:1217px;top:809px;width:32px;height:32px;background:#fff;border-radius:5px"></div>
<svg class="a" style="left:1085px;top:809px" width="164" height="32" viewBox="1085 809 164 32" fill="none" stroke="#4a5565" stroke-linecap="round" stroke-linejoin="round">
 <path d="M1092.5 819 H1100.5 M1092.5 825 H1100.5 M1092.5 831 H1100.5" stroke-width="1.9" stroke-linecap="butt"/>
 <path d="M1106 817.2 V822.6 M1102.6 820.4 L1106 817 L1109.4 820.4 M1106 826.4 V833 M1102.6 829.6 L1106 833 L1109.4 829.6" stroke-width="1.6"/>
 <path d="M1137.2 825 H1152.8" stroke-width="1.9" stroke-linecap="butt"/>
 <path d="M1145 816.5 V822 M1141.6 818.6 L1145 822 L1148.4 818.6 M1145 833.5 V828 M1141.6 831.4 L1145 828 L1148.4 831.4" stroke-width="1.6"/>
 <path d="M1191.3 816.6 H1197.3 V822.6 M1197 817 L1190.8 823.2 M1180.6 827.2 V833.3 H1186.7 M1181 833 L1187.2 826.8" stroke-width="1.9"/>
 <path d="M1227.8 821.8 L1224.6 824.9 L1227.8 828.1 M1237.6 821.8 L1240.9 824.9 L1237.6 828.1 M1235 818.6 L1231 831" stroke-width="2"/>
</svg>
<svg class="a" style="left:594px;top:435px" width="14" height="16" viewBox="594 435 14 16"><path d="M596.2 443.3 L605.6 437.6 a0.5 0.5 0 0 1 0.5 0.4 V448.7 a0.5 0.5 0 0 1-0.5 0.4Z" fill="#ff7306" stroke="#ff7306" stroke-width="0.8" stroke-linejoin="round"/></svg>
<svg class="a" style="left:590px;top:440px" width="12" height="30" viewBox="590 440 12 30"><circle cx="595.5" cy="448.3" r="0.65" fill="#8a8a8a"/><circle cx="595.5" cy="451.3" r="0.65" fill="#8a8a8a"/><circle cx="595.5" cy="454.3" r="0.65" fill="#8a8a8a"/><circle cx="595.5" cy="457.3" r="0.65" fill="#8a8a8a"/><circle cx="595.5" cy="460.3" r="0.65" fill="#8a8a8a"/><circle cx="595.5" cy="463.3" r="0.65" fill="#8a8a8a"/></svg>
</body></html>
